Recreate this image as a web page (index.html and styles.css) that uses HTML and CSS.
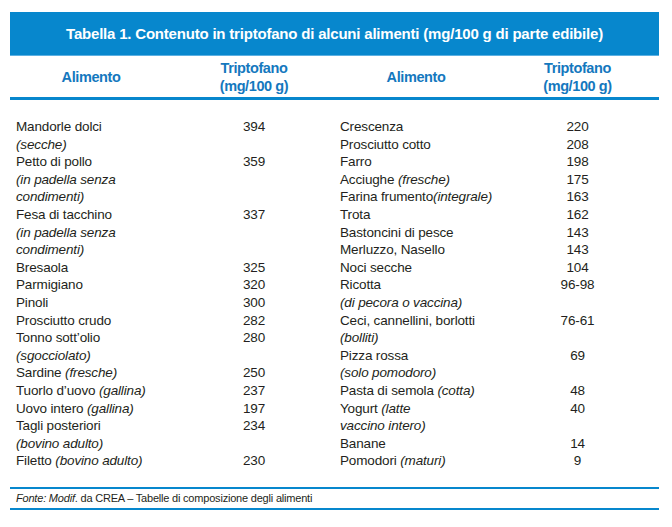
FILE: index.html
```html
<!DOCTYPE html>
<html lang="it">
<head>
<meta charset="utf-8">
<title>Tabella 1</title>
<link rel="stylesheet" href="styles.css">
</head>
<body>
<div class="sheet">
  <div class="title">Tabella 1. Contenuto in triptofano di alcuni alimenti (mg/100 g di parte edibile)</div>
  <div class="head">
    <div class="hcell">Alimento</div>
    <div class="hcell">Triptofano<br>(mg/100 g)</div>
    <div class="hcell">Alimento</div>
    <div class="hcell">Triptofano<br>(mg/100 g)</div>
  </div>
  <div class="body">
    <div class="half left">
      <div class="name">Mandorle dolci<br><i>(secche)</i></div><div class="val">394</div>
      <div class="name">Petto di pollo<br><i>(in padella senza<br>condimenti)</i></div><div class="val">359</div>
      <div class="name">Fesa di tacchino<br><i>(in padella senza<br>condimenti)</i></div><div class="val">337</div>
      <div class="name">Bresaola</div><div class="val">325</div>
      <div class="name">Parmigiano</div><div class="val">320</div>
      <div class="name">Pinoli</div><div class="val">300</div>
      <div class="name">Prosciutto crudo</div><div class="val">282</div>
      <div class="name">Tonno sott’olio<br><i>(sgocciolato)</i></div><div class="val">280</div>
      <div class="name">Sardine <i>(fresche)</i></div><div class="val">250</div>
      <div class="name">Tuorlo d’uovo <i>(gallina)</i></div><div class="val">237</div>
      <div class="name">Uovo intero <i>(gallina)</i></div><div class="val">197</div>
      <div class="name">Tagli posteriori<br><i>(bovino adulto)</i></div><div class="val">234</div>
      <div class="name">Filetto <i>(bovino adulto)</i></div><div class="val">230</div>
    </div>
    <div class="half right">
      <div class="name">Crescenza</div><div class="val">220</div>
      <div class="name">Prosciutto cotto</div><div class="val">208</div>
      <div class="name">Farro</div><div class="val">198</div>
      <div class="name">Acciughe <i>(fresche)</i></div><div class="val">175</div>
      <div class="name">Farina frumento<i>(integrale)</i></div><div class="val">163</div>
      <div class="name">Trota</div><div class="val">162</div>
      <div class="name">Bastoncini di pesce</div><div class="val">143</div>
      <div class="name">Merluzzo, Nasello</div><div class="val">143</div>
      <div class="name">Noci secche</div><div class="val">104</div>
      <div class="name">Ricotta<br><i>(di pecora o vaccina)</i></div><div class="val">96-98</div>
      <div class="name">Ceci, cannellini, borlotti<br><i>(bolliti)</i></div><div class="val">76-61</div>
      <div class="name">Pizza rossa<br><i>(solo pomodoro)</i></div><div class="val">69</div>
      <div class="name">Pasta di semola <i>(cotta)</i></div><div class="val">48</div>
      <div class="name">Yogurt <i>(latte<br>vaccino intero)</i></div><div class="val">40</div>
      <div class="name">Banane</div><div class="val">14</div>
      <div class="name">Pomodori <i>(maturi)</i></div><div class="val">9</div>
    </div>
  </div>
  <div class="source"><i>Fonte: Modif</i>. da CREA – Tabelle di composizione degli alimenti</div>
</div>
</body>
</html>
```
FILE: styles.css
```css
html, body {
  margin: 0;
  padding: 0;
  background: #ffffff;
}

.sheet {
  width: 649px;
  margin: 12px 0 0 10px;
  font-family: "Liberation Sans", Arial, sans-serif;
  color: #231f20;
}

.title {
  height: 43px;
  background: #0787cd;
  border-bottom: 1px solid #5cb0e2;
  color: #ffffff;
  font-weight: bold;
  font-size: 15px;
  line-height: 43px;
  text-align: center;
  letter-spacing: -0.2px;
}

.head {
  display: grid;
  grid-template-columns: 162px 164px 160px 163px;
  height: 41px;
  border-bottom: 3px solid #0787cd;
}

.hcell {
  display: flex;
  align-items: center;
  justify-content: center;
  text-align: center;
  color: #1478be;
  font-weight: bold;
  font-size: 14.5px;
  line-height: 18px;
  letter-spacing: -0.4px;
}

.body {
  display: grid;
  grid-template-columns: 326px 323px;
  padding: 18px 0 17px;
}

.half {
  display: grid;
  align-content: start;
  font-size: 13.5px;
  line-height: 17.6px;
  letter-spacing: -0.15px;
}

.left {
  grid-template-columns: 162px 164px;
}

.right {
  grid-template-columns: 160px 163px;
}

.left .name {
  padding-left: 6px;
}

.right .name {
  padding-left: 4px;
  white-space: nowrap;
}

.val {
  text-align: center;
}

.source {
  border-top: 2px solid #0787cd;
  border-bottom: 2px solid #0787cd;
  height: 19px;
  line-height: 19px;
  padding-left: 6px;
  font-size: 11px;
  letter-spacing: -0.2px;
}
```
